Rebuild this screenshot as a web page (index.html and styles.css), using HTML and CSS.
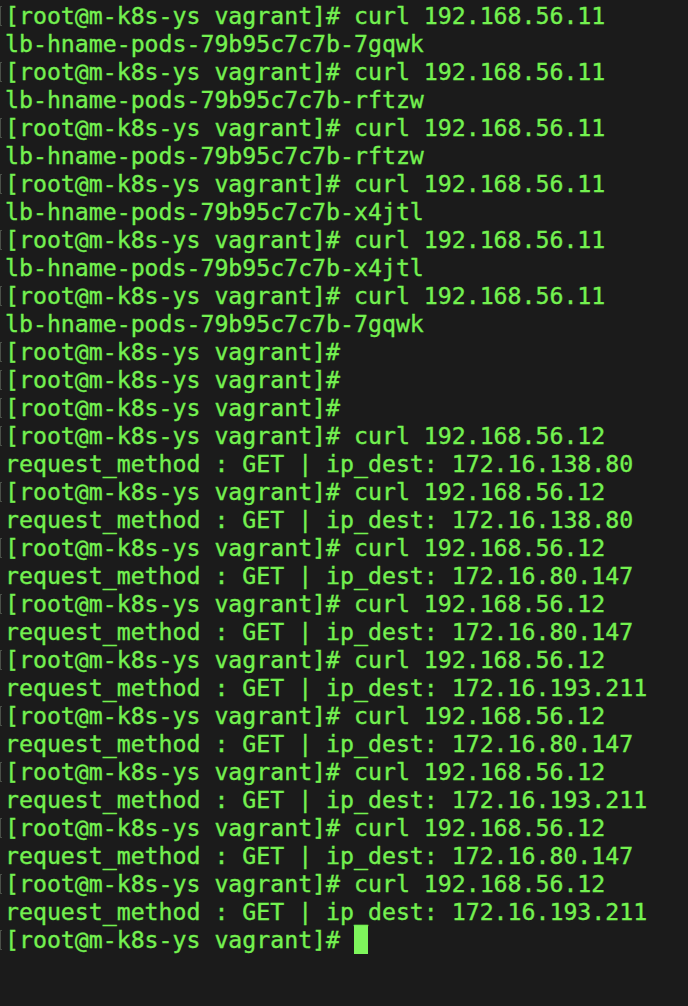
FILE: index.html
```html
<!DOCTYPE html>
<html>
<head>
<meta charset="utf-8">
<link rel="stylesheet" href="styles.css">
</head>
<body>
<div class="term">
<div class="line p"><span class="mark"></span>[root@m-k8s-ys vagrant]# curl 192.168.56.11</div>
<div class="line">lb-hname-pods-79b95c7c7b-7gqwk</div>
<div class="line p"><span class="mark"></span>[root@m-k8s-ys vagrant]# curl 192.168.56.11</div>
<div class="line">lb-hname-pods-79b95c7c7b-rftzw</div>
<div class="line p"><span class="mark"></span>[root@m-k8s-ys vagrant]# curl 192.168.56.11</div>
<div class="line">lb-hname-pods-79b95c7c7b-rftzw</div>
<div class="line p"><span class="mark"></span>[root@m-k8s-ys vagrant]# curl 192.168.56.11</div>
<div class="line">lb-hname-pods-79b95c7c7b-x4jtl</div>
<div class="line p"><span class="mark"></span>[root@m-k8s-ys vagrant]# curl 192.168.56.11</div>
<div class="line">lb-hname-pods-79b95c7c7b-x4jtl</div>
<div class="line p"><span class="mark"></span>[root@m-k8s-ys vagrant]# curl 192.168.56.11</div>
<div class="line">lb-hname-pods-79b95c7c7b-7gqwk</div>
<div class="line p"><span class="mark"></span>[root@m-k8s-ys vagrant]#</div>
<div class="line p"><span class="mark"></span>[root@m-k8s-ys vagrant]#</div>
<div class="line p"><span class="mark"></span>[root@m-k8s-ys vagrant]#</div>
<div class="line p"><span class="mark"></span>[root@m-k8s-ys vagrant]# curl 192.168.56.12</div>
<div class="line">request_method : GET | ip_dest: 172.16.138.80</div>
<div class="line p"><span class="mark"></span>[root@m-k8s-ys vagrant]# curl 192.168.56.12</div>
<div class="line">request_method : GET | ip_dest: 172.16.138.80</div>
<div class="line p"><span class="mark"></span>[root@m-k8s-ys vagrant]# curl 192.168.56.12</div>
<div class="line">request_method : GET | ip_dest: 172.16.80.147</div>
<div class="line p"><span class="mark"></span>[root@m-k8s-ys vagrant]# curl 192.168.56.12</div>
<div class="line">request_method : GET | ip_dest: 172.16.80.147</div>
<div class="line p"><span class="mark"></span>[root@m-k8s-ys vagrant]# curl 192.168.56.12</div>
<div class="line">request_method : GET | ip_dest: 172.16.193.211</div>
<div class="line p"><span class="mark"></span>[root@m-k8s-ys vagrant]# curl 192.168.56.12</div>
<div class="line">request_method : GET | ip_dest: 172.16.80.147</div>
<div class="line p"><span class="mark"></span>[root@m-k8s-ys vagrant]# curl 192.168.56.12</div>
<div class="line">request_method : GET | ip_dest: 172.16.193.211</div>
<div class="line p"><span class="mark"></span>[root@m-k8s-ys vagrant]# curl 192.168.56.12</div>
<div class="line">request_method : GET | ip_dest: 172.16.80.147</div>
<div class="line p"><span class="mark"></span>[root@m-k8s-ys vagrant]# curl 192.168.56.12</div>
<div class="line">request_method : GET | ip_dest: 172.16.193.211</div>
<div class="line p"><span class="mark"></span>[root@m-k8s-ys vagrant]# <span class="cursor"> </span></div>
</div>
</body>
</html>
```

FILE: styles.css
```css
html, body {
  margin: 0;
  padding: 0;
  background: #1b1b1b;
  height: 100%;
}
.term {
  padding: 2px 0 0 5px;
  font-family: "DejaVu Sans Mono", "Liberation Mono", monospace;
  font-size: 23.2px;
  line-height: 28px;
  color: #74f150;
  -webkit-text-stroke: 0.35px #74f150;
}
.line {
  position: relative;
  height: 28px;
  white-space: pre;
}
.mark {
  position: absolute;
  left: -5px;
  top: 4px;
  width: 2px;
  height: 20px;
  border-left: 1px solid #4a4f48;
  border-top: 1px solid #4a4f48;
  border-bottom: 1px solid #4a4f48;
  box-sizing: border-box;
}
.cursor {
  display: inline-block;
  width: 14px;
  height: 28px;
  vertical-align: top;
  background: #7ef65c;
}
```
